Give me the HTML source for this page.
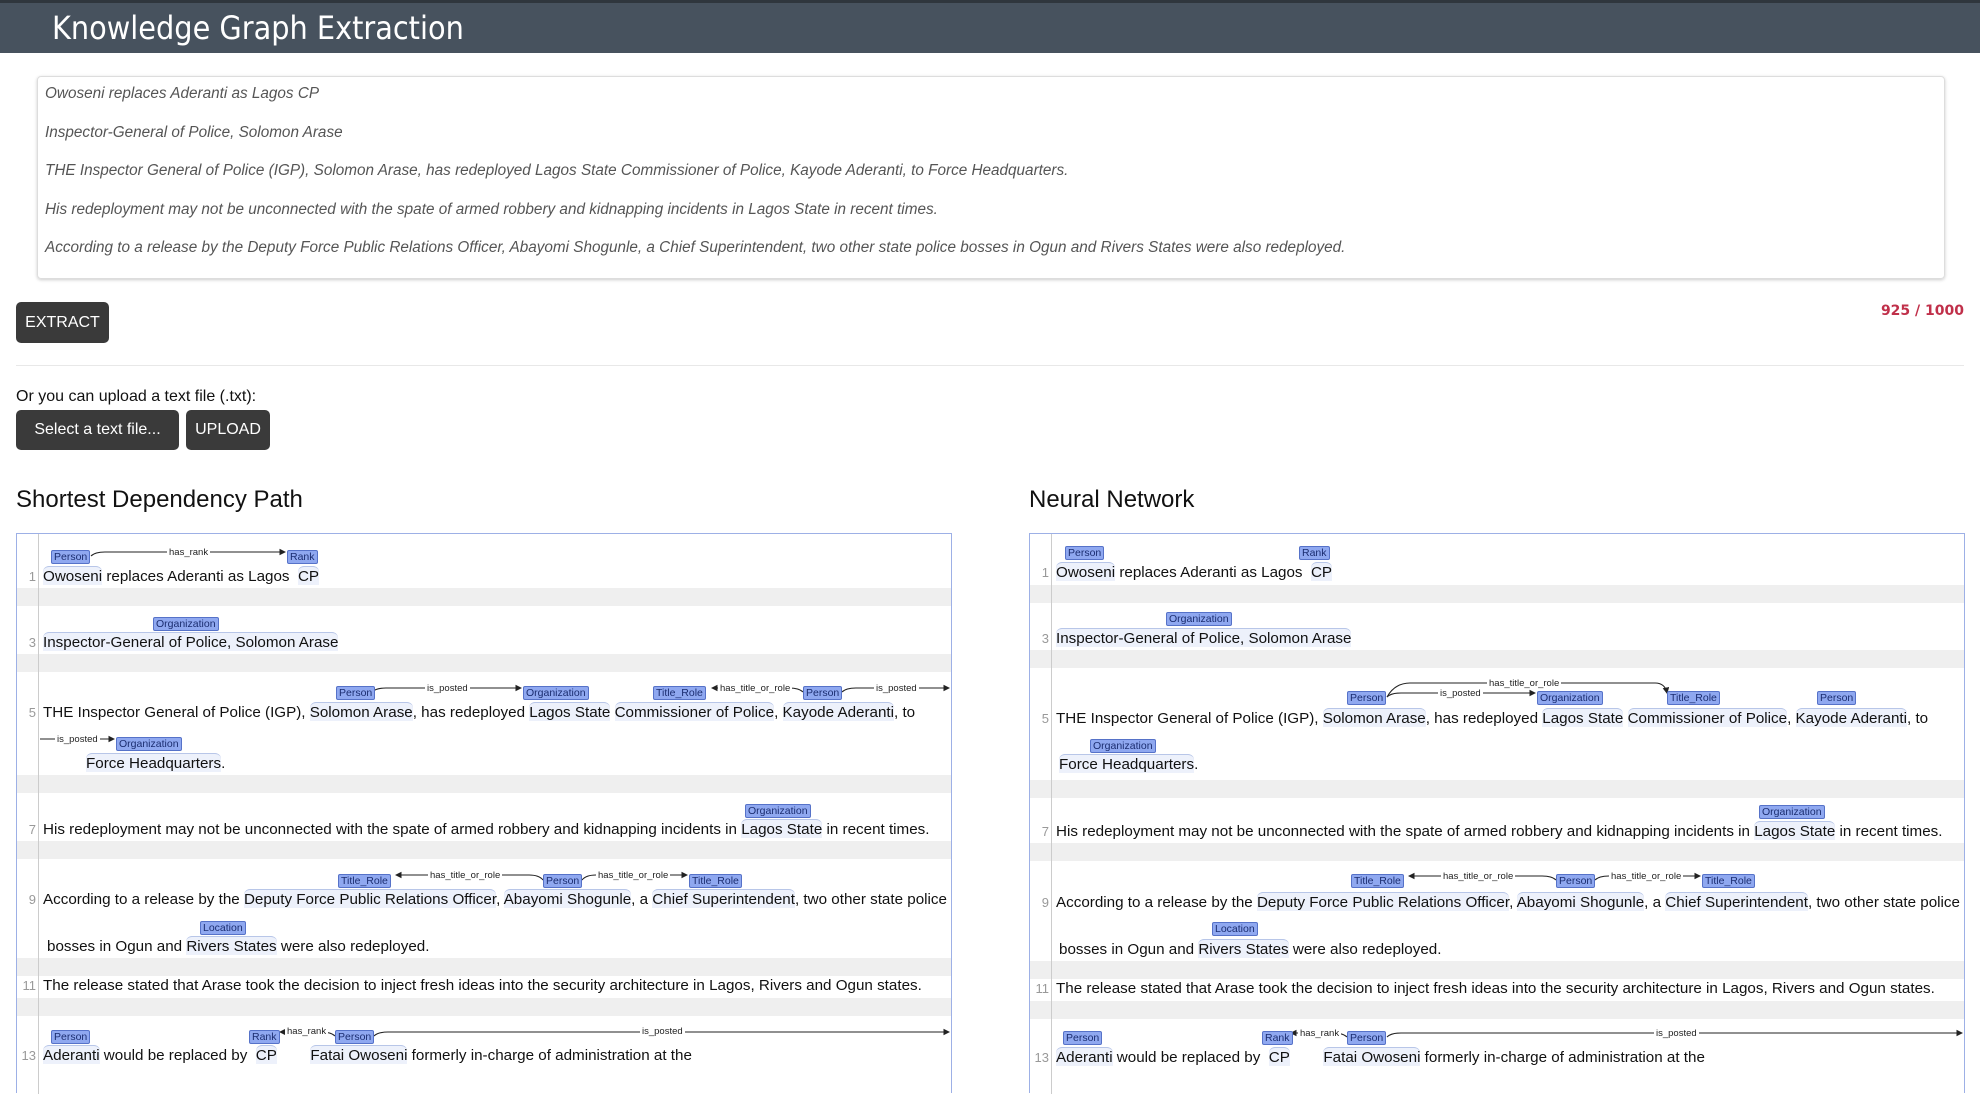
<!DOCTYPE html>
<html><head><meta charset="utf-8"><style>
*{margin:0;padding:0;box-sizing:border-box}
body{width:1980px;height:1080px;overflow:hidden;background:#fff;font-family:"Liberation Sans","DejaVu Sans",sans-serif;position:relative}
.a{position:absolute;white-space:nowrap}
.hdr{left:0;top:0;width:1980px;height:53px;background:#47525e;border-top:3px solid #2f363d}
.hdr span{position:absolute;left:52px;top:6px;color:#fff;font-size:32px;font-family:"DejaVu Sans Condensed","Liberation Sans Narrow","Liberation Sans",sans-serif}
.ta{left:37px;top:76px;width:1908px;height:203px;border:1px solid #ddd;border-radius:4px;box-shadow:0 1px 3px #ccc}
.tl{font-style:italic;color:#555;font-size:15.3px;left:45px}
.btn{background:#3a3a3a;color:#fff;border-radius:5px;font-size:16px;text-align:center}
.h2{font-size:24px;color:#111;top:486px}
.pn{border:1px solid #9db0e6;border-bottom:none;top:533px;height:560px}
.g{width:1px;background:#ccc;top:534px;height:560px}
.band{background:#efefef;height:18px}
.t{font-size:15.2px;color:#111;line-height:18px}
.n{font-size:13px;color:#999;text-align:right;width:20px;line-height:18px}
.e{background:#edf1fb;border-top:1px solid #b8c6e8;border-radius:6px 6px 0 0;padding-top:1px}
.lb{font-size:10.5px;line-height:13px;height:14px;background:#8fa8f0;border:1px solid #5672c8;border-radius:2px;color:#1b2d70;padding:0 2px}
.rl{font-size:9.5px;color:#222;background:#fff;padding:0 2px;line-height:11px}
</style></head><body>
<div class="a hdr"><span>Knowledge Graph Extraction</span></div>
<div class="a ta"></div>
<div class="a tl" style="top:85px">Owoseni replaces Aderanti as Lagos CP</div>
<div class="a tl" style="top:124px">Inspector-General of Police, Solomon Arase</div>
<div class="a tl" style="top:162px">THE Inspector General of Police (IGP), Solomon Arase, has redeployed Lagos State Commissioner of Police, Kayode Aderanti, to Force Headquarters.</div>
<div class="a tl" style="top:201px">His redeployment may not be unconnected with the spate of armed robbery and kidnapping incidents in Lagos State in recent times.</div>
<div class="a tl" style="top:239px">According to a release by the Deputy Force Public Relations Officer, Abayomi Shogunle, a Chief Superintendent, two other state police bosses in Ogun and Rivers States were also redeployed.</div>
<div class="a btn" style="left:16px;top:302px;width:93px;height:41px;line-height:41px">EXTRACT</div>
<div class="a" style="left:1870px;top:303px;width:94px;text-align:right;color:#c0304a;font-weight:bold;font-size:14px;font-family:'DejaVu Sans',sans-serif">925 / 1000</div>
<div class="a" style="left:16px;top:365px;width:1948px;height:1px;background:#e8e8e8"></div>
<div class="a" style="left:16px;top:388px;font-size:16px;color:#111">Or you can upload a text file (.txt):</div>
<div class="a btn" style="left:16px;top:410px;width:163px;height:40px;line-height:40px">Select a text file...</div>
<div class="a btn" style="left:186px;top:410px;width:84px;height:40px;line-height:40px">UPLOAD</div>
<div class="a h2" style="left:16px">Shortest Dependency Path</div>
<div class="a h2" style="left:1029px">Neural Network</div>

<!-- LEFT PANEL -->
<div class="a pn" style="left:16px;width:936px"></div>
<div class="a band" style="left:17px;width:934px;top:588px"></div>
<div class="a band" style="left:17px;width:934px;top:654px"></div>
<div class="a band" style="left:17px;width:934px;top:775px"></div>
<div class="a band" style="left:17px;width:934px;top:841px"></div>
<div class="a band" style="left:17px;width:934px;top:958px"></div>
<div class="a band" style="left:17px;width:934px;top:998px"></div>
<div class="a g" style="left:38px"></div>
<div class="a n" style="left:16px;top:568px">1</div>
<div class="a n" style="left:16px;top:634px">3</div>
<div class="a n" style="left:16px;top:704px">5</div>
<div class="a n" style="left:16px;top:821px">7</div>
<div class="a n" style="left:16px;top:891px">9</div>
<div class="a n" style="left:16px;top:977px">11</div>
<div class="a n" style="left:16px;top:1047px">13</div>
<div class="a t" style="left:43px;top:568px"><span class="e">Owoseni</span> replaces Aderanti as Lagos &nbsp;<span class="e">CP</span></div>
<div class="a t" style="left:43px;top:634px"><span class="e">Inspector-General of Police, Solomon Arase</span></div>
<div class="a t" style="left:43px;top:704px">THE Inspector General of Police (IGP), <span class="e">Solomon Arase</span>, has redeployed <span class="e">Lagos State</span> <span class="e">Commissioner of Police</span>, <span class="e">Kayode Aderanti</span>, to</div>
<div class="a t" style="left:86px;top:755px"><span class="e">Force Headquarters</span>.</div>
<div class="a t" style="left:43px;top:821px">His redeployment may not be unconnected with the spate of armed robbery and kidnapping incidents in <span class="e">Lagos State</span> in recent times.</div>
<div class="a t" style="left:43px;top:891px">According to a release by the <span class="e">Deputy Force Public Relations Officer</span>, <span class="e">Abayomi Shogunle</span>, a <span class="e">Chief Superintendent</span>, two other state police</div>
<div class="a t" style="left:47px;top:938px">bosses in Ogun and <span class="e">Rivers States</span> were also redeployed.</div>
<div class="a t" style="left:43px;top:977px">The release stated that Arase took the decision to inject fresh ideas into the security architecture in Lagos, Rivers and Ogun states.</div>
<div class="a t" style="left:43px;top:1047px"><span class="e">Aderanti</span> would be replaced by &nbsp;<span class="e">CP</span> &nbsp; &nbsp; &nbsp; &nbsp;<span class="e">Fatai Owoseni</span> formerly in-charge of administration at the</div>

<!-- RIGHT PANEL -->
<div class="a pn" style="left:1029px;width:936px"></div>
<div class="a band" style="left:1030px;width:934px;top:585px"></div>
<div class="a band" style="left:1030px;width:934px;top:650px"></div>
<div class="a band" style="left:1030px;width:934px;top:780px"></div>
<div class="a band" style="left:1030px;width:934px;top:843px"></div>
<div class="a band" style="left:1030px;width:934px;top:961px"></div>
<div class="a band" style="left:1030px;width:934px;top:1001px"></div>
<div class="a g" style="left:1051px"></div>
<div class="a n" style="left:1029px;top:564px">1</div>
<div class="a n" style="left:1029px;top:630px">3</div>
<div class="a n" style="left:1029px;top:710px">5</div>
<div class="a n" style="left:1029px;top:823px">7</div>
<div class="a n" style="left:1029px;top:894px">9</div>
<div class="a n" style="left:1029px;top:980px">11</div>
<div class="a n" style="left:1029px;top:1049px">13</div>
<div class="a t" style="left:1056px;top:564px"><span class="e">Owoseni</span> replaces Aderanti as Lagos &nbsp;<span class="e">CP</span></div>
<div class="a t" style="left:1056px;top:630px"><span class="e">Inspector-General of Police, Solomon Arase</span></div>
<div class="a t" style="left:1056px;top:710px">THE Inspector General of Police (IGP), <span class="e">Solomon Arase</span>, has redeployed <span class="e">Lagos State</span> <span class="e">Commissioner of Police</span>, <span class="e">Kayode Aderanti</span>, to</div>
<div class="a t" style="left:1059px;top:756px"><span class="e">Force Headquarters</span>.</div>
<div class="a t" style="left:1056px;top:823px">His redeployment may not be unconnected with the spate of armed robbery and kidnapping incidents in <span class="e">Lagos State</span> in recent times.</div>
<div class="a t" style="left:1056px;top:894px">According to a release by the <span class="e">Deputy Force Public Relations Officer</span>, <span class="e">Abayomi Shogunle</span>, a <span class="e">Chief Superintendent</span>, two other state police</div>
<div class="a t" style="left:1059px;top:941px">bosses in Ogun and <span class="e">Rivers States</span> were also redeployed.</div>
<div class="a t" style="left:1056px;top:980px">The release stated that Arase took the decision to inject fresh ideas into the security architecture in Lagos, Rivers and Ogun states.</div>
<div class="a t" style="left:1056px;top:1049px"><span class="e">Aderanti</span> would be replaced by &nbsp;<span class="e">CP</span> &nbsp; &nbsp; &nbsp; &nbsp;<span class="e">Fatai Owoseni</span> formerly in-charge of administration at the</div>

<svg class="a" style="left:0;top:0" width="1980" height="1080">
<defs><marker id="m" markerWidth="6" markerHeight="6" refX="5" refY="3" orient="auto"><path d="M0,0 L6,3 L0,6z" fill="#222"/></marker></defs>
<g fill="none" stroke="#222" stroke-width="1.1">
<path d="M91 556 Q95 552 105 552 L285 552" marker-end="url(#m)"/>
<path d="M372 692 Q376 688 386 688 L521 688" marker-end="url(#m)"/>
<path d="M803 692 Q799 688 789 688 L712 688" marker-end="url(#m)"/>
<path d="M842 692 Q846 688 856 688 L949 688" marker-end="url(#m)"/>
<path d="M40 739 L114 739" marker-end="url(#m)"/>
<path d="M543 880 Q539 875 529 875 L396 875" marker-end="url(#m)"/>
<path d="M582 880 Q586 875 596 875 L687 875" marker-end="url(#m)"/>
<path d="M335 1036 Q331 1032 321 1032 L280 1032" marker-end="url(#m)"/>
<path d="M374 1036 Q378 1032 388 1032 L949 1032" marker-end="url(#m)"/>
<path d="M1387 697 Q1391 693 1401 693 L1535 693" marker-end="url(#m)"/>
<path d="M1387 697 Q1395 683 1410 683 L1655 683 Q1665 683 1667 693" marker-end="url(#m)"/>
<path d="M1556 880 Q1552 876 1542 876 L1409 876" marker-end="url(#m)"/>
<path d="M1595 880 Q1599 876 1609 876 L1700 876" marker-end="url(#m)"/>
<path d="M1347 1037 Q1343 1033 1333 1033 L1291 1033" marker-end="url(#m)"/>
<path d="M1387 1037 Q1391 1033 1401 1033 L1962 1033" marker-end="url(#m)"/>
</g></svg>
<div class="a rl" style="left:167px;top:547px">has_rank</div>
<div class="a rl" style="left:425px;top:683px">is_posted</div>
<div class="a rl" style="left:718px;top:683px">has_title_or_role</div>
<div class="a rl" style="left:874px;top:683px">is_posted</div>
<div class="a rl" style="left:55px;top:734px">is_posted</div>
<div class="a rl" style="left:428px;top:870px">has_title_or_role</div>
<div class="a rl" style="left:596px;top:870px">has_title_or_role</div>
<div class="a rl" style="left:285px;top:1026px">has_rank</div>
<div class="a rl" style="left:640px;top:1026px">is_posted</div>
<div class="a rl" style="left:1438px;top:688px">is_posted</div>
<div class="a rl" style="left:1487px;top:678px">has_title_or_role</div>
<div class="a rl" style="left:1441px;top:871px">has_title_or_role</div>
<div class="a rl" style="left:1609px;top:871px">has_title_or_role</div>
<div class="a rl" style="left:1298px;top:1028px">has_rank</div>
<div class="a rl" style="left:1654px;top:1028px">is_posted</div>
<div class="a lb" style="left:51px;top:550px">Person</div>
<div class="a lb" style="left:287px;top:550px">Rank</div>
<div class="a lb" style="left:153px;top:617px">Organization</div>
<div class="a lb" style="left:336px;top:686px">Person</div>
<div class="a lb" style="left:523px;top:686px">Organization</div>
<div class="a lb" style="left:653px;top:686px">Title_Role</div>
<div class="a lb" style="left:803px;top:686px">Person</div>
<div class="a lb" style="left:116px;top:737px">Organization</div>
<div class="a lb" style="left:745px;top:804px">Organization</div>
<div class="a lb" style="left:338px;top:874px">Title_Role</div>
<div class="a lb" style="left:543px;top:874px">Person</div>
<div class="a lb" style="left:689px;top:874px">Title_Role</div>
<div class="a lb" style="left:200px;top:921px">Location</div>
<div class="a lb" style="left:51px;top:1030px">Person</div>
<div class="a lb" style="left:249px;top:1030px">Rank</div>
<div class="a lb" style="left:335px;top:1030px">Person</div>
<div class="a lb" style="left:1065px;top:546px">Person</div>
<div class="a lb" style="left:1299px;top:546px">Rank</div>
<div class="a lb" style="left:1166px;top:612px">Organization</div>
<div class="a lb" style="left:1347px;top:691px">Person</div>
<div class="a lb" style="left:1537px;top:691px">Organization</div>
<div class="a lb" style="left:1667px;top:691px">Title_Role</div>
<div class="a lb" style="left:1817px;top:691px">Person</div>
<div class="a lb" style="left:1090px;top:739px">Organization</div>
<div class="a lb" style="left:1759px;top:805px">Organization</div>
<div class="a lb" style="left:1351px;top:874px">Title_Role</div>
<div class="a lb" style="left:1556px;top:874px">Person</div>
<div class="a lb" style="left:1702px;top:874px">Title_Role</div>
<div class="a lb" style="left:1212px;top:922px">Location</div>
<div class="a lb" style="left:1063px;top:1031px">Person</div>
<div class="a lb" style="left:1262px;top:1031px">Rank</div>
<div class="a lb" style="left:1347px;top:1031px">Person</div>
</body></html>
